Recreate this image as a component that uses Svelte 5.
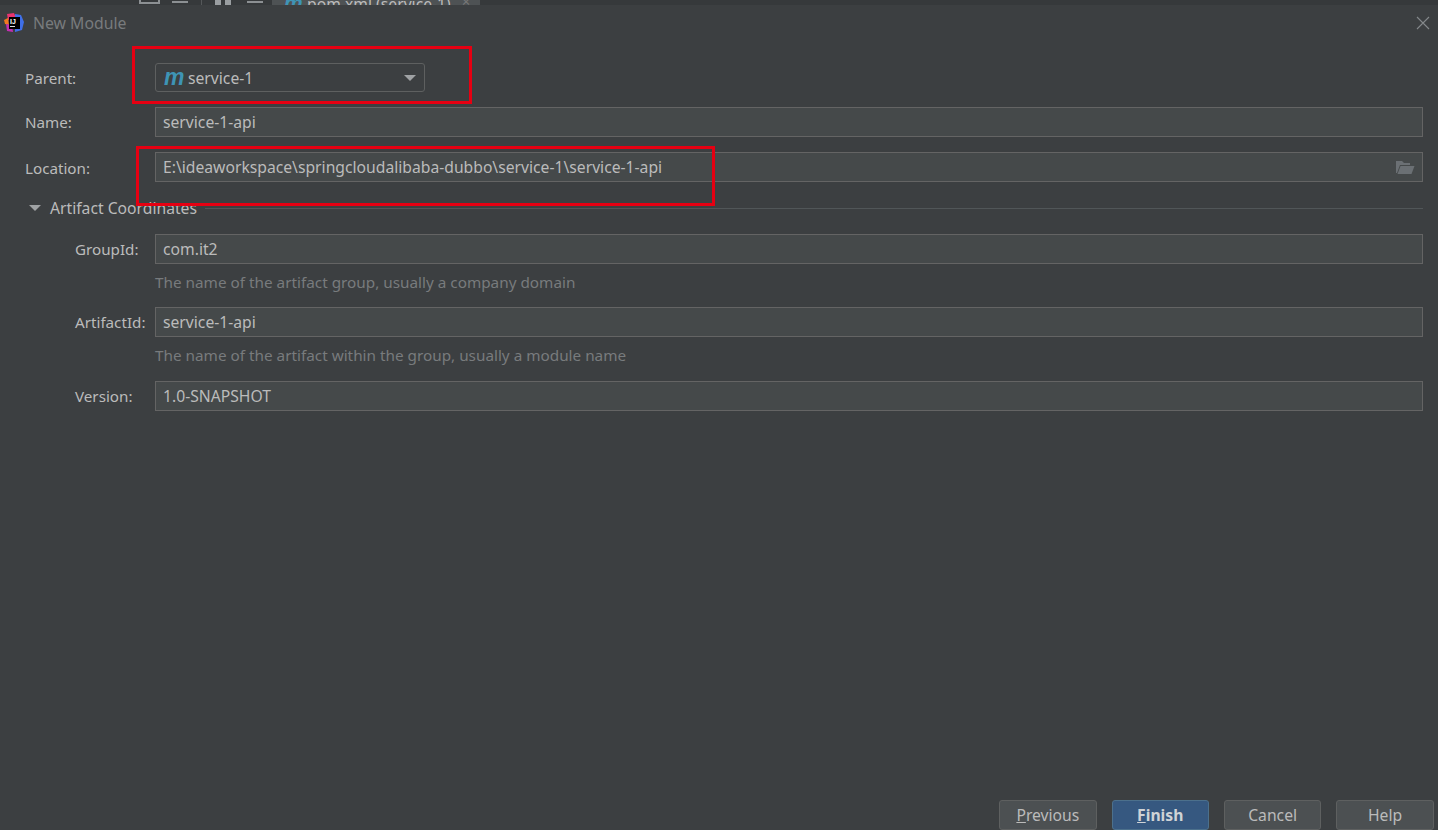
<script lang="ts">
  const coords = [
    { label: 'GroupId:', value: 'com.it2', hint: 'The name of the artifact group, usually a company domain' },
    { label: 'ArtifactId:', value: 'service-1-api', hint: 'The name of the artifact within the group, usually a module name' },
    { label: 'Version:', value: '1.0-SNAPSHOT', hint: '' }
  ];
</script>

<div class="dialog">
  <!-- sliver of the IDE window behind the dialog -->
  <div class="behind">
    <div class="behind-icons">
      <span class="bi bi-a"></span>
      <span class="bi bi-b"></span>
      <span class="bi-sep"></span>
      <span class="bi bi-c"></span>
      <span class="bi bi-b"></span>
    </div>
    <div class="behind-tab">
      <span class="maven-sm">m</span>
      <span class="tab-name">pom.xml (service-1)</span>
      <span class="tab-x">×</span>
    </div>
  </div>

  <div class="titlebar">
    <svg class="logo" width="20" height="20" viewBox="0 0 20 20" aria-hidden="true">
      <path d="M3 1 L10 0 L12 5 L4 7 Z" fill="#e8346f" />
      <path d="M11 1 L17 2 L20 9 L18 17 L11 19 Z" fill="#3f6fe8" />
      <path d="M0 7 L4 5 L5 12 L1 11 Z" fill="#f07a1e" />
      <path d="M2 11 L8 12 L9 19 L3 18 Z" fill="#c22fb0" />
      <rect x="5" y="4" width="11" height="12" fill="#000" />
      <text x="6" y="10.5" class="logo-text">IJ</text>
      <rect x="6" y="13" width="5" height="1" fill="#ddd" />
    </svg>
    <span class="title">New Module</span>
    <svg class="close" width="14" height="14" viewBox="0 0 14 14" aria-hidden="true">
      <path d="M1 1 L13 13 M13 1 L1 13" stroke="#85898b" stroke-width="1.1" fill="none" />
    </svg>
  </div>

  <div class="form">
    <div class="row parent-row">
      <span class="label">Parent:</span>
      <div class="combo">
        <span class="maven">m</span>
        <span class="combo-value">service-1</span>
        <span class="combo-arrow"></span>
      </div>
    </div>

    <div class="row name-row">
      <span class="label">Name:</span>
      <div class="field">service-1-api</div>
    </div>

    <div class="row location-row">
      <span class="label">Location:</span>
      <div class="field">
        <span class="grow">E:\ideaworkspace\springcloudalibaba-dubbo\service-1\service-1-api</span>
        <svg width="20" height="16" viewBox="0 0 20 16" aria-hidden="true">
          <path d="M1 14 V2 H7 L9 4 H15 V6 H5 L2 14 Z" fill="#6b7074" />
          <path d="M5.5 7 H19.5 L16.5 15 H2.5 Z" fill="#6b7074" />
        </svg>
      </div>
    </div>

    <div class="section-head">
      <span class="disclosure"></span>
      <span class="section-title">Artifact Coordinates</span>
      <span class="section-line"></span>
    </div>

    <div class="coords">
      {#each coords as c}
        <div class="row coord-row">
          <span class="label coord-label">{c.label}</span>
          <div class="field">{c.value}</div>
        </div>
        {#if c.hint}
          <div class="hint">{c.hint}</div>
        {/if}
      {/each}
    </div>
  </div>

  <div class="footer">
    <button class="btn"><u>P</u>revious</button>
    <button class="btn primary"><u>F</u>inish</button>
    <button class="btn">Cancel</button>
    <button class="btn">Help</button>
  </div>

  <!-- annotation boxes drawn on top of the screenshot -->
  <div class="mark mark-parent"></div>
  <div class="mark mark-location"></div>
</div>

<style>
  :global(body) {
    margin: 0;
    background: #3c3f41;
  }

  .dialog {
    position: relative;
    display: flex;
    flex-direction: column;
    width: 1438px;
    height: 830px;
    overflow: hidden;
    background: #3c3f41;
    color: #bbbbbb;
    font-family: "Noto Sans", "Open Sans", sans-serif;
    font-size: 15.2px;
  }

  .behind {
    display: flex;
    align-items: flex-end;
    flex-shrink: 0;
    height: 5px;
    padding-left: 139px;
    overflow: hidden;
    background: #36393b;
  }

  .behind-icons {
    display: flex;
    align-items: flex-end;
    width: 133px;
    height: 5px;
  }

  .bi {
    display: block;
    flex-shrink: 0;
    width: 16px;
    height: 2px;
    margin-bottom: 2px;
    background: #8c9093;
  }

  .bi-a {
    box-sizing: border-box;
    width: 21px;
    height: 4px;
    margin: 0 12px 1px 0;
    border: 2px solid #8c9093;
    border-top: 0;
    background: transparent;
  }

  .bi-c {
    width: 16px;
    height: 5px;
    margin: 0 16px 0 13px;
    background: linear-gradient(90deg, #9a9ea1 35%, transparent 35%, transparent 65%, #9a9ea1 65%);
  }

  .bi-sep {
    flex-shrink: 0;
    width: 1px;
    height: 5px;
    margin-left: 13px;
    background: #55585a;
  }

  .behind-tab {
    display: flex;
    align-items: flex-end;
    box-sizing: border-box;
    width: 208px;
    height: 5px;
    padding-left: 12px;
    overflow: hidden;
    background: #4e5254;
    color: #bbbbbb;
    white-space: nowrap;
  }

  .maven-sm {
    width: 23px;
    margin-bottom: -8px;
    color: #3e94b5;
    font-family: "Liberation Sans", sans-serif;
    font-size: 21px;
    font-style: italic;
    font-weight: 700;
    line-height: 20px;
  }

  .tab-name {
    margin-bottom: -6px;
    font-size: 15.7px;
    line-height: 14px;
  }

  .tab-x {
    margin: 0 0 -3px 11px;
    color: #777777;
    font-size: 15px;
    line-height: 14px;
  }

  .titlebar {
    display: flex;
    align-items: center;
    flex-shrink: 0;
    height: 36px;
    padding: 0 8px 0 4px;
  }

  .logo {
    flex-shrink: 0;
    margin-top: -1px;
  }

  .logo-text {
    font-family: "Liberation Sans", sans-serif;
    font-size: 7px;
    font-weight: 700;
    fill: #ffffff;
  }

  .title {
    flex: 1;
    margin-left: 9px;
    color: #787b7d;
    font-size: 15.8px;
    line-height: 20px;
  }

  .form {
    display: flex;
    flex-direction: column;
    padding: 22px 15px 0 25px;
  }

  .row {
    display: flex;
    align-items: center;
  }

  .label {
    flex-shrink: 0;
    width: 130px;
    color: #bbbbbb;
    line-height: 20px;
  }

  .location-row .label {
    padding-top: 2px;
  }

  .parent-row {
    height: 29px;
  }

  .name-row,
  .location-row {
    margin-top: 15px;
  }

  .combo {
    display: flex;
    align-items: center;
    box-sizing: border-box;
    width: 270px;
    height: 29px;
    padding: 0 8px;
    border: 1px solid #5e6060;
    border-radius: 3px;
    background: #3c3f41;
  }

  .maven {
    width: 24px;
    margin-top: -1px;
    color: #3e94b5;
    font-family: "Liberation Sans", sans-serif;
    font-size: 23px;
    font-style: italic;
    font-weight: 700;
    line-height: 1;
  }

  .combo-value {
    flex: 1;
    font-size: 15.7px;
  }

  .combo-arrow {
    width: 0;
    height: 0;
    border-left: 6px solid transparent;
    border-right: 6px solid transparent;
    border-top: 6px solid #9fa2a4;
  }

  .field {
    display: flex;
    flex: 1;
    align-items: center;
    box-sizing: border-box;
    height: 30px;
    padding: 0 7px;
    border: 1px solid #646464;
    background: #45494a;
    color: #bbbbbb;
    font-size: 15.7px;
    line-height: 20px;
    white-space: nowrap;
  }

  .grow {
    flex: 1;
  }

  .section-head {
    display: flex;
    align-items: center;
    height: 20px;
    margin-top: 16px;
    padding-left: 4px;
  }

  .disclosure {
    width: 0;
    height: 0;
    border-left: 6px solid transparent;
    border-right: 6px solid transparent;
    border-top: 6px solid #9fa2a4;
  }

  .section-title {
    margin-left: 9px;
    color: #bbbbbb;
    font-size: 15.7px;
  }

  .section-line {
    flex: 1;
    height: 1px;
    margin: 1px 0 0 8px;
    background: #515658;
  }

  .coords {
    display: flex;
    flex-direction: column;
    margin-top: 16px;
    padding-left: 50px;
  }

  .coord-label {
    width: 80px;
  }

  .hint {
    box-sizing: border-box;
    height: 43px;
    padding: 7px 0 0 80px;
    color: #787b7d;
    font-size: 15.3px;
    line-height: 22px;
  }

  .hint + .coord-row + .hint {
    height: 44px;
  }

  .footer {
    display: flex;
    justify-content: flex-end;
    gap: 15px;
    margin-top: auto;
    padding-right: 4.3px;
  }

  .btn {
    box-sizing: border-box;
    width: 97.4px;
    height: 30px;
    padding: 0;
    border: 1px solid #5e6060;
    border-radius: 3px;
    background: #4c5052;
    color: #bbbbbb;
    font: inherit;
    font-size: 15.7px;
  }

  .btn.primary {
    border-color: #4c708c;
    background: #365880;
    color: #cfd3d6;
    font-weight: 700;
  }

  .mark {
    position: absolute;
    box-sizing: border-box;
    border: 3px solid #e60012;
    pointer-events: none;
  }

  .mark-parent {
    left: 132px;
    top: 46px;
    width: 340px;
    height: 58px;
  }

  .mark-location {
    left: 136px;
    top: 146px;
    width: 579px;
    height: 60px;
  }
</style>
